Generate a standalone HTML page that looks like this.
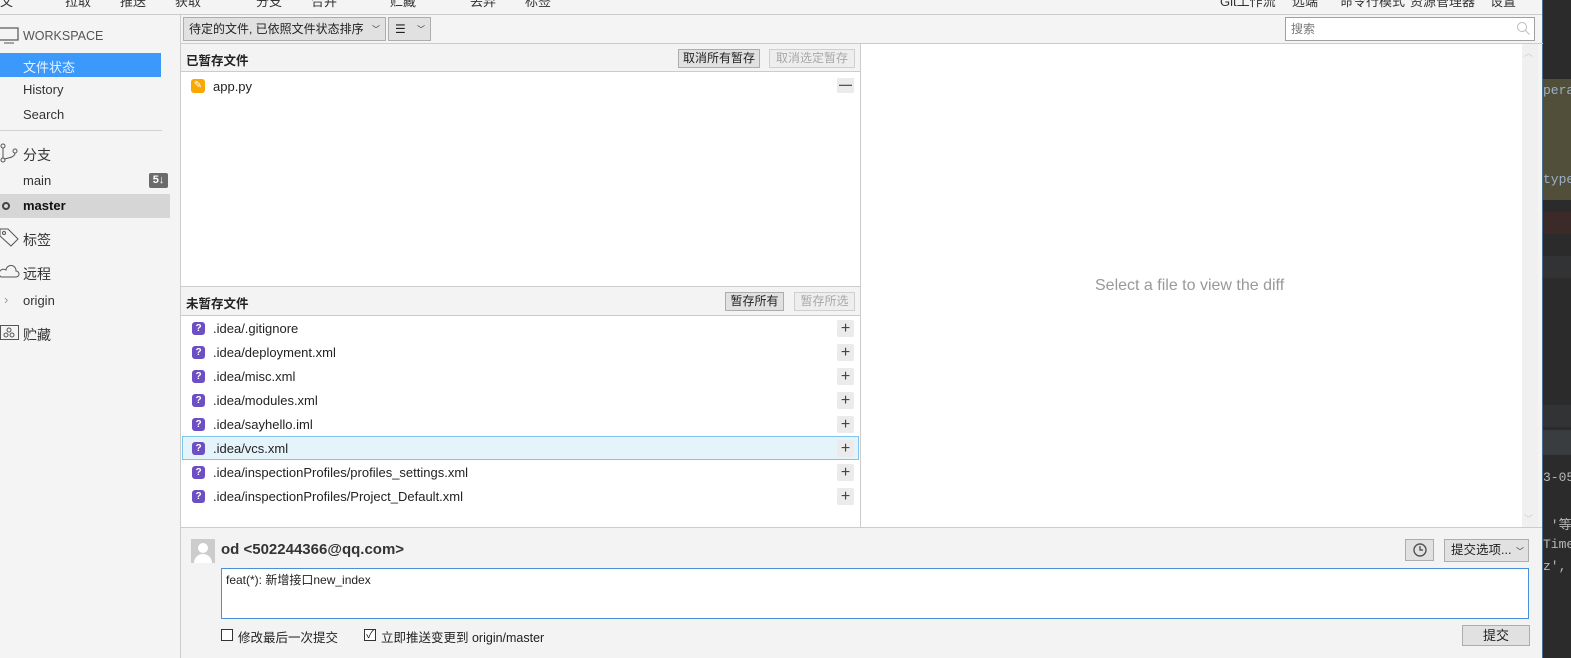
<!DOCTYPE html>
<html><head><meta charset="utf-8"><style>
*{box-sizing:border-box;margin:0;padding:0}
body{width:1571px;height:658px;overflow:hidden;background:#f4f4f4;font-family:"Liberation Sans","Noto Sans CJK SC",sans-serif;font-size:13px;color:#222;position:relative}
.a{position:absolute;white-space:nowrap}
.menu span{position:absolute;top:-9px;font-size:13px;color:#333;white-space:nowrap}
.btn{position:absolute;border:1px solid #adadad;background:#e1e1e1;font-size:12px;text-align:center;line-height:17px;height:19px;white-space:nowrap}
.dis{color:#a8a8a8;border-color:#cfcfcf;background:#eee}
.row{position:absolute;left:182px;width:677px;height:24px;line-height:24px;font-size:13px}
.row .ic{position:absolute;left:10px;top:5px;width:13px;height:13px;border-radius:3px;background:#6c4fc2;color:#fff;font-size:10px;font-weight:bold;text-align:center;line-height:13px}
.row .t{position:absolute;left:31px}
.row .pl{position:absolute;left:655px;top:3px;width:17px;height:17px;background:#ebebeb;border-radius:2px;font-size:16px;line-height:17px;text-align:center;color:#444}
.side{position:absolute;left:23px;font-size:13px;color:#333}
.dk{position:absolute;left:1543px;font-family:'Liberation Mono','Noto Sans CJK SC',monospace;font-size:13px;white-space:nowrap;overflow:hidden;width:28px}
</style></head><body>
<div class="menu">
<span style="left:0">文</span><span style="left:65px">拉取</span><span style="left:120px">推送</span><span style="left:175px">获取</span><span style="left:256px">分支</span><span style="left:311px">合并</span><span style="left:390px">贮藏</span><span style="left:470px">丢弃</span><span style="left:525px">标签</span>
<span style="left:1220px">Git工作流</span><span style="left:1292px">远端</span><span style="left:1340px">命令行模式</span><span style="left:1410px">资源管理器</span><span style="left:1490px">设置</span>
</div>
<div class="a" style="left:0;top:14px;width:1543px;height:1px;background:#ccc"></div>
<!-- dark IDE -->
<div class="a" style="left:1542px;top:0;width:29px;height:658px;background:#2b2b2b;border-left:1px solid #4a6d8c"></div>
<div class="a" style="left:1543px;top:79px;width:28px;height:121px;background:#514f3a"></div>
<div class="dk" style="top:83px;color:#9bb0c8">pera</div>
<div class="dk" style="top:172px;color:#9bb0c8">type</div>
<div class="a" style="left:1543px;top:212px;width:28px;height:22px;background:#3b2a28"></div>
<div class="a" style="left:1543px;top:256px;width:28px;height:22px;background:#313335"></div>
<div class="a" style="left:1543px;top:405px;width:28px;height:22px;background:#313335"></div>
<div class="a" style="left:1543px;top:430px;width:28px;height:25px;background:#3a3d40"></div>
<div class="dk" style="top:470px;color:#b7b7b7">3-05</div>
<div class="dk" style="top:514px;color:#b7b7b7">&nbsp;'等</div>
<div class="dk" style="top:537px;color:#b7b7b7">Time</div>
<div class="dk" style="top:559px;color:#b7b7b7">z',</div>
<!-- sidebar -->
<svg class="a" style="left:0;top:27px" width="20" height="18"><rect x="-2" y="1" width="20" height="12" fill="none" stroke="#555" stroke-width="1.2"/><line x1="4" y1="16" x2="14" y2="16" stroke="#555"/></svg>
<div class="a" style="left:23px;top:29px;font-size:12.5px;color:#555">WORKSPACE</div>
<div class="a" style="left:0;top:53px;width:161px;height:24px;background:#3b99fc"></div>
<div class="side" style="top:57px;color:#e8f2ff">文件状态</div>
<div class="side" style="top:82px">History</div>
<div class="side" style="top:107px">Search</div>
<div class="a" style="left:0;top:130px;width:162px;height:1px;background:#d0d0d0"></div>
<svg class="a" style="left:0;top:143px" width="20" height="20" fill="none" stroke="#555"><circle cx="3" cy="3" r="2"/><circle cx="3" cy="17" r="2"/><circle cx="15" cy="8" r="2"/><path d="M3 5v10M15 10c0 4-6 5-11 6"/></svg>
<div class="side" style="top:145px;font-size:14px">分支</div>
<div class="side" style="top:173px">main</div>
<div class="a" style="left:149px;top:173px;width:19px;height:15px;background:#6b6b6b;border-radius:2px;color:#fff;font-size:11px;font-weight:bold;text-align:center;line-height:15px">5↓</div>
<div class="a" style="left:0;top:194px;width:170px;height:24px;background:#d6d6d6"></div>
<div class="a" style="left:2px;top:202px;width:8px;height:8px;border:2px solid #444;border-radius:50%"></div>
<div class="side" style="top:198px;font-weight:bold;color:#111">master</div>
<svg class="a" style="left:0;top:227px" width="20" height="20" fill="none" stroke="#555"><path d="M0 2h8l10 10-7 7L0 9z"/><circle cx="4" cy="6" r="1.5"/></svg>
<div class="side" style="top:230px;font-size:14px">标签</div>
<svg class="a" style="left:0;top:265px" width="20" height="14" fill="none" stroke="#555"><path d="M1 12h15a3 3 0 0 0 0-6 5 5 0 0 0-10-1A4 4 0 0 0 1 12z"/></svg>
<div class="side" style="top:264px;font-size:14px">远程</div>
<div class="a" style="left:4px;top:292px;color:#999;font-size:13px">›</div>
<div class="side" style="top:293px">origin</div>
<svg class="a" style="left:0;top:325px" width="20" height="16" fill="none" stroke="#555"><rect x="0.5" y="0.5" width="18" height="14"/><circle cx="9" cy="5" r="2"/><circle cx="6" cy="10" r="2"/><circle cx="12" cy="10" r="2"/></svg>
<div class="side" style="top:325px;font-size:14px">贮藏</div>
<!-- main -->
<div class="a" style="left:180px;top:15px;width:1px;height:643px;background:#ccc"></div>
<div class="btn" style="left:183px;top:17px;width:203px;height:24px;line-height:22px;text-align:left;padding-left:5px;font-size:12px">待定的文件, 已依照文件状态排序<span style="position:absolute;right:5px;font-size:8px;top:1px">﹀</span></div>
<div class="btn" style="left:388px;top:17px;width:43px;height:24px;line-height:22px;text-align:left;padding-left:6px">☰<span style="position:absolute;right:5px;font-size:8px;top:1px">﹀</span></div>
<div class="a" style="left:1285px;top:17px;width:250px;height:24px;border:1px solid #a0a0a0;background:#fff;padding-left:5px;line-height:22px;font-size:12px;color:#777">搜索</div>
<svg class="a" style="left:1516px;top:21px" width="14" height="14" fill="none" stroke="#bbb"><circle cx="6" cy="6" r="4.5"/><path d="M9.5 9.5l4 4"/></svg>
<div class="a" style="left:181px;top:43px;width:1362px;height:1px;background:#ccc"></div>
<!-- staged -->
<div class="a" style="left:181px;top:44px;width:679px;height:28px;background:#f3f3f3;border-bottom:1px solid #ccc"></div>
<div class="a" style="left:186px;top:50px;font-weight:bold;font-size:12.5px">已暂存文件</div>
<div class="btn" style="left:678px;top:49px;width:82px">取消所有暂存</div>
<div class="btn dis" style="left:769px;top:49px;width:86px">取消选定暂存</div>
<div class="a" style="left:181px;top:72px;width:679px;height:214px;background:#fff"></div>
<div class="a" style="left:191px;top:79px;width:14px;height:14px;border-radius:3px;background:#f9a800;color:#fff;font-size:10px;text-align:center;line-height:14px">✎</div>
<div class="a" style="left:213px;top:79px;font-size:13px">app.py</div>
<div class="a" style="left:837px;top:78px;width:17px;height:15px;background:#ebebeb;text-align:center;line-height:14px;font-weight:bold;color:#555">—</div>
<div class="a" style="left:860px;top:44px;width:1px;height:483px;background:#ccc"></div>
<!-- unstaged -->
<div class="a" style="left:181px;top:286px;width:679px;height:30px;background:#f3f3f3;border-top:1px solid #ccc;border-bottom:1px solid #ccc"></div>
<div class="a" style="left:186px;top:293px;font-weight:bold;font-size:12.5px">未暂存文件</div>
<div class="btn" style="left:725px;top:292px;width:59px">暂存所有</div>
<div class="btn dis" style="left:794px;top:292px;width:61px">暂存所选</div>
<div class="a" style="left:181px;top:316px;width:679px;height:211px;background:#fff"></div>
<div class="a" style="left:182px;top:436px;width:677px;height:24px;background:#e5f3fb;border:1px solid #7fc4ec"></div>
<div class="row" style="top:317px"><div class="ic">?</div><div class="t">.idea/.gitignore</div><div class="pl">+</div></div>
<div class="row" style="top:341px"><div class="ic">?</div><div class="t">.idea/deployment.xml</div><div class="pl">+</div></div>
<div class="row" style="top:365px"><div class="ic">?</div><div class="t">.idea/misc.xml</div><div class="pl">+</div></div>
<div class="row" style="top:389px"><div class="ic">?</div><div class="t">.idea/modules.xml</div><div class="pl">+</div></div>
<div class="row" style="top:413px"><div class="ic">?</div><div class="t">.idea/sayhello.iml</div><div class="pl">+</div></div>
<div class="row" style="top:437px"><div class="ic">?</div><div class="t">.idea/vcs.xml</div><div class="pl">+</div></div>
<div class="row" style="top:461px"><div class="ic">?</div><div class="t">.idea/inspectionProfiles/profiles_settings.xml</div><div class="pl">+</div></div>
<div class="row" style="top:485px"><div class="ic">?</div><div class="t">.idea/inspectionProfiles/Project_Default.xml</div><div class="pl">+</div></div>
<!-- diff -->
<div class="a" style="left:861px;top:44px;width:661px;height:483px;background:#fff"></div>
<div class="a" style="left:1522px;top:44px;width:16px;height:483px;background:#f0f0f0"></div>
<div class="a" style="left:1524px;top:46px;font-size:9px;color:#ccc">︿</div>
<div class="a" style="left:1524px;top:512px;font-size:9px;color:#ccc">﹀</div>
<div class="a" style="left:1095px;top:277px;font-size:16px;color:#999">Select a file to view the diff</div>
<!-- commit -->
<div class="a" style="left:181px;top:527px;width:1361px;height:1px;background:#ccc"></div>
<div class="a" style="left:181px;top:528px;width:1361px;height:130px;background:#f3f3f3"></div>
<div class="a" style="left:191px;top:539px;width:24px;height:24px;background:#ccc;overflow:hidden"><div style="position:absolute;left:7px;top:4px;width:10px;height:10px;border-radius:50%;background:#fff"></div><div style="position:absolute;left:3px;top:15px;width:18px;height:14px;border-radius:9px 9px 0 0;background:#fff"></div></div>
<div class="a" style="left:221px;top:541px;font-size:15px;font-weight:bold;color:#333">od &lt;502244366@qq.com&gt;</div>
<div class="btn" style="left:1405px;top:539px;width:29px;height:22px"><svg width="16" height="16" style="margin-top:2px" fill="none" stroke="#555" stroke-width="1.4"><circle cx="8" cy="8" r="6"/><path d="M8 4v4h3"/></svg></div>
<div class="btn" style="left:1444px;top:539px;width:85px;height:23px;line-height:21px;text-align:left;padding-left:6px;font-size:12.5px">提交选项...<span style="position:absolute;right:4px;font-size:8px;top:1px">﹀</span></div>
<div class="a" style="left:221px;top:568px;width:1308px;height:51px;background:#fff;border:1px solid #4a90d9;padding:2px 4px;font-size:12px">feat(*): 新增接口new_index</div>
<div class="a" style="left:221px;top:629px;width:12px;height:12px;border:1px solid #333;background:#fff"></div>
<div class="a" style="left:238px;top:627px;font-size:12.5px">修改最后一次提交</div>
<div class="a" style="left:364px;top:629px;width:12px;height:12px;border:1px solid #333;background:#fff;font-size:11px;line-height:10px;text-align:center">✓</div>
<div class="a" style="left:381px;top:627px;font-size:12.5px">立即推送变更到 origin/master</div>
<div class="btn" style="left:1462px;top:625px;width:68px;height:21px;line-height:19px;font-size:13px">提交</div>
</body></html>
